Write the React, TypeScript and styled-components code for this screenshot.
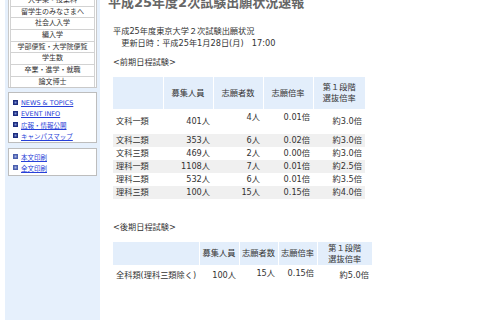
import styled, { createGlobalStyle } from "styled-components";

const GlobalStyle = createGlobalStyle`
  html, body {
    margin: 0;
    padding: 0;
    background: #ffffff;
  }
  body {
    font-family: "DejaVu Sans", "Noto Sans CJK JP", sans-serif;
    color: #333333;
    overflow: hidden;
  }
`;

type Row = {
  name: string;
  quota: string;
  applicants: string;
  ratio: string;
  cut: string;
};

const firstRows: Array<Row> = [
  { name: "文科一類", quota: "401人", applicants: "4人", ratio: "0.01倍", cut: "約3.0倍" },
  { name: "文科二類", quota: "353人", applicants: "6人", ratio: "0.02倍", cut: "約3.0倍" },
  { name: "文科三類", quota: "469人", applicants: "2人", ratio: "0.00倍", cut: "約3.0倍" },
  { name: "理科一類", quota: "1108人", applicants: "7人", ratio: "0.01倍", cut: "約2.5倍" },
  { name: "理科二類", quota: "532人", applicants: "6人", ratio: "0.01倍", cut: "約3.5倍" },
  { name: "理科三類", quota: "100人", applicants: "15人", ratio: "0.15倍", cut: "約4.0倍" },
];

const secondRows: Array<Row> = [
  { name: "全科類(理科三類除く)", quota: "100人", applicants: "15人", ratio: "0.15倍", cut: "約5.0倍" },
];

const menuItems = [
  "入学案・授業料",
  "留学生のみなさまへ",
  "社会人入学",
  "編入学",
  "学部便覧・大学院便覧",
  "学生数",
  "卒業・進学・就職",
  "論文博士",
];

const newsLinks = ["NEWS & TOPICS", "EVENT INFO", "広報・情報公開", "キャンパスマップ"];
const printLinks = ["本文印刷", "全文印刷"];

const Bullet = ({ light }: { light?: boolean }) => (
  <svg width="5" height="5" viewBox="0 0 5 5">
    <rect width="5" height="5" fill={light ? "#4a5fae" : "#1d2c7e"} />
    <rect x="1.5" y="1.5" width="2" height="2" fill={light ? "#a9b6e6" : "#7d8fd6"} />
  </svg>
);

type ResultTableProps = {
  widths: Array<number>;
  headHeight: number;
  rows: Array<Row>;
  firstRowHeight: number;
};

const ResultTable = (props: ResultTableProps) => {
  const total = props.widths.reduce((a, b) => a + b, 0);
  return (
    <Table $width={total}>
      <colgroup>
        {props.widths.map((w, i) => (
          <col key={i} style={{ width: w }} />
        ))}
      </colgroup>
      <thead>
        <HeadRow $height={props.headHeight}>
          <HeadCell></HeadCell>
          <HeadCell>募集人員</HeadCell>
          <HeadCell>志願者数</HeadCell>
          <HeadCell>志願倍率</HeadCell>
          <HeadCell>
            第１段階
            <br />
            選抜倍率
          </HeadCell>
        </HeadRow>
      </thead>
      <tbody>
        {props.rows.map((row, index) => (
          <BodyRow
            key={index}
            $striped={index % 2 === 1}
            $height={index === 0 ? props.firstRowHeight : 13}
          >
            <NameCell>{row.name}</NameCell>
            <NumCell>{row.quota}</NumCell>
            <NumCell $top={index === 0}>{row.applicants}</NumCell>
            <NumCell $top={index === 0}>{row.ratio}</NumCell>
            <NumCell>{row.cut}</NumCell>
          </BodyRow>
        ))}
      </tbody>
    </Table>
  );
};

export default function App() {
  return (
    <>
      <GlobalStyle />
      <Page>
        <Sidebar>
          <MenuBox>
            {menuItems.map((item, index) => (
              <MenuItem key={index}>{item}</MenuItem>
            ))}
          </MenuBox>
          <LinkBox $pad="4px 0 1px">
            {newsLinks.map((item, index) => (
              <LinkItem key={index}>
                <Bullet />
                <LinkText href="#">{item}</LinkText>
              </LinkItem>
            ))}
          </LinkBox>
          <LinkBox $pad="2px 0 2px">
            {printLinks.map((item, index) => (
              <LinkItem key={index}>
                <Bullet light />
                <LinkText href="#">{item}</LinkText>
              </LinkItem>
            ))}
          </LinkBox>
        </Sidebar>
        <Main>
          <Title>平成25年度2次試験出願状況速報</Title>
          <Content>
            <Line>平成25年度東京大学２次試験出願状況</Line>
            <Line>　更新日時：平成25年1月28日(月)　17:00</Line>
            <Label $gap={7}>&lt;前期日程試験&gt;</Label>
            <ResultTable
              widths={[50, 50, 50, 50, 52]}
              headHeight={32}
              rows={firstRows}
              firstRowHeight={25}
            />
            <Label $gap={22}>&lt;後期日程試験&gt;</Label>
            <ResultTable
              widths={[86, 40, 39, 39, 55]}
              headHeight={23}
              rows={secondRows}
              firstRowHeight={21}
            />
          </Content>
        </Main>
      </Page>
    </>
  );
}

const Page = styled.div`
  display: flex;
  margin-top: -6px;
  padding-left: 5px;
  min-height: 340px;
`;

const Sidebar = styled.aside`
  width: 95px;
  flex-shrink: 0;
  background: #e6f0fc;
  padding: 0 3px;
  box-sizing: border-box;
  display: flex;
  flex-direction: column;
  gap: 4px;
`;

const MenuBox = styled.ul`
  list-style: none;
  margin: 0;
  padding: 0 1px;
  background: #ffffff;
  border: 1px solid #c9c9c9;
`;

const MenuItem = styled.li`
  height: 10.67px;
  line-height: 10.67px;
  font-size: 7px;
  text-align: center;
  color: #333333;
  background: #ffffff;
  border-bottom: 1px solid #d2d2d2;
  border-left: 1px solid #d2d2d2;
  border-right: 1px solid #d2d2d2;
  white-space: nowrap;
  &:last-child {
    border-bottom: none;
  }
`;

const LinkBox = styled.ul<{ $pad: string }>`
  list-style: none;
  margin: 0;
  padding: ${(p) => p.$pad};
  background: #ffffff;
  border: 1px solid #bdbdbd;
  & + & {
    margin-top: 1px;
  }
`;

const LinkItem = styled.li`
  display: flex;
  align-items: center;
  gap: 3px;
  height: 11px;
  padding-left: 4px;
`;

const LinkText = styled.a`
  font-size: 6.5px;
  color: #2740d8;
  text-decoration: underline;
  white-space: nowrap;
`;

const Main = styled.main`
  flex: 1;
  min-width: 0;
`;

const Title = styled.h1`
  margin: 0;
  padding: 1px 0 0 8px;
  font-size: 13px;
  line-height: 16px;
  font-weight: bold;
  color: #666666;
  white-space: nowrap;
`;

const Content = styled.div`
  padding: 14px 0 0 13px;
  font-size: 8.2px;
`;

const Line = styled.div`
  line-height: 12px;
  white-space: nowrap;
`;

const Label = styled.div<{ $gap: number }>`
  margin-top: ${(p) => p.$gap}px;
  margin-bottom: 9px;
  line-height: 12px;
`;

const Table = styled.table<{ $width: number }>`
  width: ${(p) => p.$width}px;
  table-layout: fixed;
  border-collapse: collapse;
  font-size: 8.2px;
  color: #333333;
`;

const HeadRow = styled.tr<{ $height: number }>`
  height: ${(p) => p.$height}px;
  background: #e3eefb;
`;

const HeadCell = styled.th`
  padding: 0;
  font-weight: normal;
  text-align: center;
  vertical-align: middle;
  line-height: 11px;
  border-left: 1px solid #ffffff;
  white-space: nowrap;
  &:first-child {
    border-left: none;
  }
`;

const BodyRow = styled.tr<{ $striped: boolean; $height: number }>`
  height: ${(p) => p.$height}px;
  background: ${(p) => (p.$striped ? "#f0f0f0" : "#ffffff")};
`;

const NameCell = styled.td`
  padding: 0 3px;
  line-height: 13px;
  white-space: nowrap;
  vertical-align: middle;
`;

const NumCell = styled.td<{ $top?: boolean }>`
  padding: ${(p) => (p.$top ? "2px 3px 0" : "0 3px")};
  line-height: 13px;
  text-align: right;
  white-space: nowrap;
  vertical-align: ${(p) => (p.$top ? "top" : "middle")};
`;
